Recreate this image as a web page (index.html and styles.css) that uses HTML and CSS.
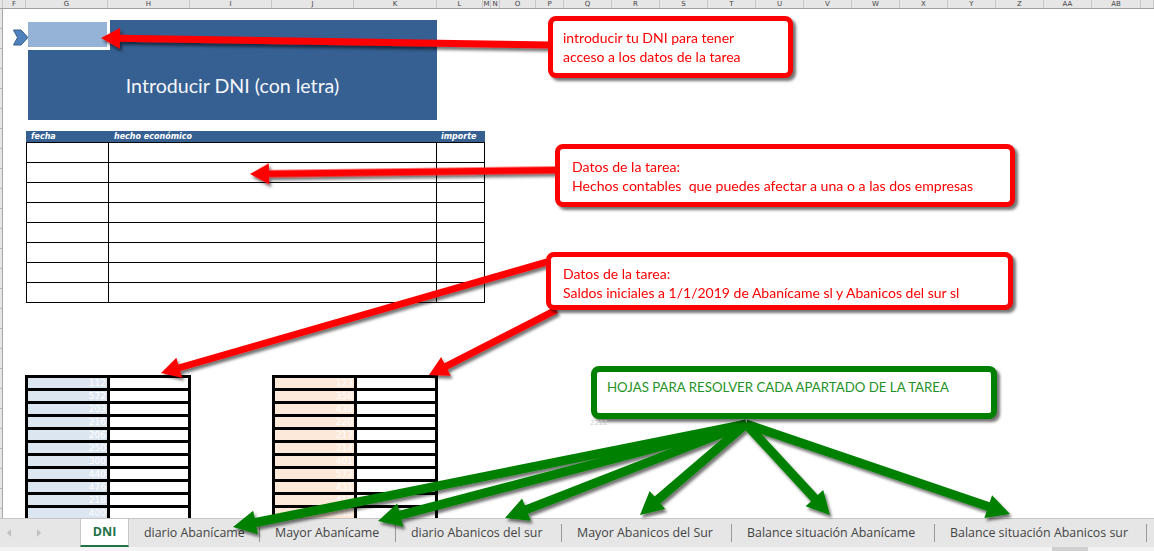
FILE: index.html
```html
<!DOCTYPE html>
<html lang="es">
<head>
<meta charset="utf-8">
<title>DNI</title>
<link rel="stylesheet" href="styles.css">
</head>
<body>
<div class="page">
  <div class="colhead">
    <span></span><span>F</span><span>G</span><span>H</span><span>I</span><span>J</span><span>K</span><span>L</span><span>M</span><span>N</span><span>O</span><span>P</span><span>Q</span><span>R</span><span>S</span><span>T</span><span>U</span><span>V</span><span>W</span><span>X</span><span>Y</span><span>Z</span><span>AA</span><span>AB</span><span></span>
  </div>

  <div class="sheet">
    <div class="gutter"></div>
    <div class="canvas">
      <svg class="marker" width="16" height="17" viewBox="0 0 16 17"><path d="M0.5 1 L8 1 L15 8.5 L8 16 L0.5 16 L4.5 8.5 Z" fill="#4f81bd" stroke="#385d8a" stroke-width="1"/></svg>
      <div class="dni-shape">
        <div class="dni-frame"><div class="dni-input"></div></div>
        <span class="dni-label">Introducir DNI (con letra)</span>
      </div>

      <div class="facts">
        <div class="facts-head"><span>fecha</span><span>hecho económico</span><span>importe</span></div>
        <div class="facts-body">
          <div></div><div></div><div></div>
          <div></div><div></div><div></div>
          <div></div><div></div><div></div>
          <div></div><div></div><div></div>
          <div></div><div></div><div></div>
          <div></div><div></div><div></div>
          <div></div><div></div><div></div>
          <div></div><div></div><div></div>
        </div>
      </div>

      <div class="ledgers">
        <div class="ledger blue">
          <div class="n">112</div><div></div>
          <div class="n">572</div><div></div>
          <div class="n">203</div><div></div>
          <div class="n">216</div><div></div>
          <div class="n">206</div><div></div>
          <div class="n">250</div><div></div>
          <div class="n">300</div><div></div>
          <div class="n">440</div><div></div>
          <div class="n">476</div><div></div>
          <div class="n">218</div><div></div>
          <div class="n">400</div><div></div>
          <div class="n">100</div><div></div>
        </div>
        <div class="ledger peach">
          <div class="n">123</div><div></div>
          <div class="n">350</div><div></div>
          <div class="n">430</div><div></div>
          <div class="n">220</div><div></div>
          <div class="n">217</div><div></div>
          <div class="n">214</div><div></div>
          <div class="n">401</div><div></div>
          <div class="n">572</div><div></div>
          <div class="n">431</div><div></div>
          <div class="n">410</div><div></div>
          <div class="n">310</div><div></div>
          <div class="n">100</div><div></div>
        </div>
      </div>
    </div>
  </div>

  <div class="tabbar">
    <div class="nav"><span class="tri left"></span><span class="tri right"></span></div>
    <div class="tab active">DNI</div>
    <div class="tab t1">diario Abanícame</div>
    <div class="tab t2">Mayor Abanícame</div>
    <div class="tab t3">diario Abanicos del sur</div>
    <div class="tab t4">Mayor Abanicos del Sur</div>
    <div class="tab t5">Balance situación Abanícame</div>
    <div class="tab t6">Balance situación Abanicos sur</div>
  </div>
  <div class="hscroll"><div class="thumb"></div></div>

  <svg class="arrows" width="1154" height="551" viewBox="0 0 1154 551">
    <defs>
      <filter id="sh" x="-10%" y="-50%" width="120%" height="200%">
        <feDropShadow dx="2" dy="3" stdDeviation="1.5" flood-color="#000" flood-opacity="0.55"/>
      </filter>
    </defs>
    <g fill="#ff0000" filter="url(#sh)">
      <polygon transform="translate(101 38) rotate(0.89)" points="0,0 19,-10.5 19,-3.5 449,-3.5 449,3.5 19,3.5 19,10.5"/>
      <polygon transform="translate(250 174) rotate(-0.75)" points="0,0 19,-10.5 19,-3.5 306,-3.5 306,3.5 19,3.5 19,10.5"/>
      <polygon transform="translate(161 373) rotate(-16.04)" points="0,0 19,-10.5 19,-3.5 402,-3.5 402,3.5 19,3.5 19,10.5"/>
      <polygon transform="translate(429 375) rotate(-27.1)" points="0,0 19,-10.5 19,-3.5 143,-3.5 143,3.5 19,3.5 19,10.5"/>
    </g>
    <g fill="#008000" filter="url(#sh)">
      <polygon transform="translate(233 527) rotate(-11.35)" points="0,0 23,-12 23,-4.5 523,-4.5 523,4.5 23,4.5 23,12"/>
      <polygon transform="translate(378 521) rotate(-14.77)" points="0,0 23,-12 23,-4.5 381,-4.5 381,4.5 23,4.5 23,12"/>
      <polygon transform="translate(505 518) rotate(-21.31)" points="0,0 23,-12 23,-4.5 259,-4.5 259,4.5 23,4.5 23,12"/>
      <polygon transform="translate(640 515) rotate(-40.65)" points="0,0 23,-12 23,-4.5 140,-4.5 140,4.5 23,4.5 23,12"/>
      <polygon transform="translate(830 515) rotate(-132.71)" points="0,0 23,-12 23,-4.5 124,-4.5 124,4.5 23,4.5 23,12"/>
      <polygon transform="translate(1010 514) rotate(-161.18)" points="0,0 23,-12 23,-4.5 279,-4.5 279,4.5 23,4.5 23,12"/>
    </g>
  </svg>

  <div class="callout red c1">introducir tu DNI para tener<br>acceso a los datos de la tarea</div>
  <div class="callout red c2">Datos de la tarea:<br>Hechos contables&nbsp; que puedes afectar a una o a las dos empresas</div>
  <div class="callout red c3">Datos de la tarea:<br>Saldos iniciales a 1/1/2019 de Abanícame sl y Abanicos del sur sl</div>
  <div class="callout green c4">HOJAS PARA RESOLVER CADA APARTADO DE LA TAREA</div>
  <span class="tiny">2222</span>
</div>
</body>
</html>
```

FILE: styles.css
```css
* { box-sizing: border-box; margin: 0; padding: 0; }
body { margin: 0; background: #fff; font-family: "Open Sans", sans-serif; }

.page {
  position: relative;
  width: 1154px;
  height: 551px;
  overflow: hidden;
  background: #fff;
}

/* column header */
.colhead {
  display: grid;
  grid-template-columns: 3px 23px repeat(4, 82px) 83px 46px 8px 9px 36px 28px repeat(11, 48px) 49px 1fr;
  height: 9px;
  background: #e6e6e6;
  border-bottom: 1px solid #a0a0a0;
}
.colhead span {
  font: 7px/8px "DejaVu Sans", sans-serif;
  color: #444;
  text-align: center;
  border-right: 1px solid #c8c8c8;
  overflow: hidden;
}

/* sheet */
.sheet { display: flex; height: 509px; }
.gutter {
  width: 3px;
  background: #e6e6e6 repeating-linear-gradient(to bottom, transparent 0 19px, #b8b8b8 19px 20px);
  border-right: 1px solid #a8a8a8;
}
.canvas { flex: 1; position: relative; overflow: hidden; }

.marker { position: absolute; left: 10px; top: 20px; }

.dni-shape {
  position: absolute;
  left: 25px;
  top: 11px;
  width: 409px;
  height: 100px;
  background: #366092;
  display: flex;
  justify-content: center;
  align-items: center;
  padding-top: 30px;
}
.dni-frame {
  position: absolute;
  left: 0;
  top: 0;
  width: 82px;
  height: 30px;
  background: #fff;
  padding-top: 2px;
}
.dni-input { width: 79px; height: 25px; background: #95b3d7; }
.dni-label {
  font-family: "Lato", sans-serif;
  font-size: 19.6px;
  color: #f4f6fa;
}

/* facts table */
.facts { margin: 122px 0 0 23px; width: 459px; }
.facts-head {
  display: grid;
  grid-template-columns: 83px 328px 48px;
  height: 11px;
  background: #366092;
}
.facts-head span {
  font: italic bold 8px/11px "DejaVu Sans", sans-serif;
  color: #fff;
  padding-left: 5px;
}
.facts-head span:last-child { padding-left: 4px; }
.facts-body {
  display: grid;
  grid-template-columns: 82px 328px 48px;
  grid-auto-rows: 20px;
  border-left: 1px solid #000;
  border-top: 1px solid #000;
}
.facts-body div { border-right: 1px solid #000; border-bottom: 1px solid #000; }

/* ledgers */
.ledgers { display: flex; gap: 81px; margin: 72px 0 0 22px; }
.ledger {
  display: grid;
  grid-template-columns: 79px 78px;
  grid-auto-rows: 10px;
  gap: 3px;
  padding: 3px;
  background: #000;
}
.ledger div { background: #fff; }
.ledger.blue .n { background: #dce6f1; }
.ledger.peach .n { background: #fde9d9; }
.ledger .n {
  font: 9px/10px "DejaVu Sans", sans-serif;
  color: #fff;
  text-align: right;
  padding-right: 1px;
}

/* tab bar */
.tabbar {
  display: flex;
  align-items: center;
  height: 29px;
  background: #e6e6e6;
  border-top: 1px solid #c6c6c6;
}
.nav { width: 80px; height: 100%; position: relative; flex: none; }
.tri { position: absolute; top: 10px; width: 0; height: 0; border-top: 4px solid transparent; border-bottom: 4px solid transparent; }
.tri.left { left: 7px; border-right: 4px solid #c0c0c0; }
.tri.right { left: 37px; border-left: 4px solid #c0c0c0; }
.tab {
  flex: none;
  font-size: 12.4px;
  line-height: 18px;
  color: #444;
  padding-left: 15px;
  border-right: 1px solid #9a9a9a;
  white-space: nowrap;
  overflow: hidden;
}
.t1 { width: 131px; }
.t2 { width: 136px; }
.t3 { width: 166px; }
.t4 { width: 170px; }
.t5 { width: 203px; }
.t6 { width: 212px; }
.tab.active {
  align-self: stretch;
  width: 49px;
  padding: 0;
  background: #fff;
  color: #217346;
  font-size: 12.5px;
  line-height: 26px;
  font-weight: 700;
  text-align: center;
  border-left: 1px solid #c6c6c6;
  border-right: 1px solid #c6c6c6;
  border-bottom: 2px solid #217346;
}
.hscroll { height: 4px; background: #f3f3f3; position: relative; }
.thumb { position: absolute; left: 1052px; top: 0; width: 36px; height: 4px; background: #cfcfcf; }

/* overlay */
.arrows { position: absolute; left: 0; top: 0; }

.callout {
  position: absolute;
  background: #fff;
  border: 5px solid;
  border-radius: 8px;
  box-shadow: 3px 3px 3px rgba(0, 0, 0, 0.55);
  font-family: "Lato", sans-serif;
  font-size: 14px;
  line-height: 19px;
  white-space: nowrap;
}
.callout.red { border-color: #ff0000; color: #ff0000; }
.callout.green { border-color: #008000; color: #1f931f; border-width: 6px; }
.c1 { left: 548px; top: 16px; width: 245px; height: 62px; padding: 7px 0 0 10px; }
.c2 { left: 555px; top: 144px; width: 460px; height: 63px; padding: 8px 0 0 12px; font-size: 14.1px; }
.c3 { left: 546px; top: 252px; width: 467px; height: 58px; padding: 8px 0 0 12px; line-height: 18.5px; }
.c4 { left: 591px; top: 366px; width: 406px; height: 53px; padding: 6px 0 0 10px; font-size: 13.25px; }

.tiny {
  position: absolute;
  left: 590px;
  top: 419px;
  font: 7px/8px "DejaVu Sans", sans-serif;
  color: #cfcfcf;
}
```
